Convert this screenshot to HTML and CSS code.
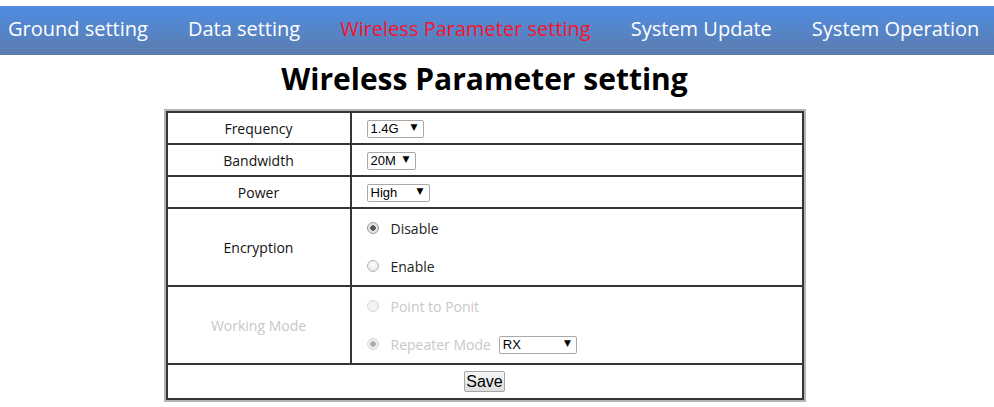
FILE: index.html
```html
<!DOCTYPE html>
<html>
<head>
	<title>Wireless Parameter setting</title>
	<link rel="stylesheet" href="styles.css">
</head>
<body>
	<div class="topbar">
		<a class="navitem" href="#">Ground setting</a>
		<a class="navitem" href="#">Data setting</a>
		<a class="navitem active" href="#">Wireless Parameter setting</a>
		<a class="navitem" href="#">System Update</a>
		<a class="navitem" href="#">System Operation</a>
	</div>

	<div class="content">
		<h1 class="title">Wireless Parameter setting</h1>

		<div class="frame">
		<table class="settings">
			<tr>
				<td class="name">Frequency</td>
				<td class="value">
					<span class="dropdown">
						<select class="sel sel-freq"><option>1.4G</option><option>2.4G</option></select>
					</span>
				</td>
			</tr>
			<tr>
				<td class="name">Bandwidth</td>
				<td class="value">
					<span class="dropdown">
						<select class="sel sel-bw"><option>20M</option><option>10M</option></select>
					</span>
				</td>
			</tr>
			<tr>
				<td class="name">Power</td>
				<td class="value">
					<span class="dropdown">
						<select class="sel sel-power"><option>High</option><option>Low</option></select>
					</span>
				</td>
			</tr>
			<tr class="tall">
				<td class="name">Encryption</td>
				<td class="value">
					<label class="opt"><input type="radio" name="enc" checked> Disable</label>
					<label class="opt"><input type="radio" name="enc"> Enable</label>
				</td>
			</tr>
			<tr class="tall disabled">
				<td class="name">Working Mode</td>
				<td class="value">
					<label class="opt"><input type="radio" name="mode" disabled> Point to Ponit</label>
					<label class="opt"><input type="radio" name="mode" checked disabled> Repeater Mode
						<span class="dropdown">
							<select class="sel sel-mode"><option>RX</option><option>TX</option></select>
						</span>
					</label>
				</td>
			</tr>
			<tr class="last">
				<td class="savecell" colspan="2"><button class="savebtn">Save</button></td>
			</tr>
		</table>
		</div>
	</div>
</body>
</html>
```

FILE: styles.css
```css
body {
	margin: 0;
	background: #fff;
	font-family: "Open Sans", "Noto Sans", sans-serif;
}

.topbar {
	display: flex;
	gap: 40px;
	margin-top: 6px;
	padding-left: 8px;
	height: 49px;
	padding-bottom: 4px;
	box-sizing: border-box;
	align-items: center;
	background: linear-gradient(#4f8de3, #5b7cad);
}

.navitem {
	color: #fff;
	text-decoration: none;
	font-size: 20px;
	white-space: nowrap;
}

.navitem.active {
	color: #f5142c;
}

.content {
	width: 969px;
}

.title {
	margin: 4px 0 10px;
	text-align: center;
	font-size: 30px;
	line-height: 40px;
	font-weight: bold;
	color: #000;
}

.frame {
	width: 638px;
	margin: 0 auto;
	border: 2px solid #b4b4b4;
}

.settings {
	width: 100%;
	border-spacing: 0;
	border: 2px solid #353535;
	font-size: 14px;
}

.settings td {
	border-bottom: 2px solid #353535;
	height: 30px;
	padding: 0;
}

.settings .last td {
	border-bottom: 0;
	height: 33px;
}

.name {
	width: 182px;
	text-align: center;
	color: #111;
	border-right: 2px solid #353535;
}

.value {
	padding-left: 15px !important;
}

.tall td {
	height: 76px;
}

.tall.disabled td {
	height: 75px;
}

.opt {
	display: flex;
	align-items: center;
	height: 38px;
	color: #222;
}

.disabled .name,
.disabled .opt {
	color: #c8c8c8;
}

.opt input {
	appearance: none;
	width: 12px;
	height: 12px;
	margin: 0 12px 0 0;
	border: 1px solid #b4b4b4;
	border-radius: 50%;
	background: radial-gradient(circle at 50% 35%, #fff, #e2e2e2);
}

.opt input:checked {
	background: radial-gradient(circle, #555 0 2.5px, #e6e6e6 3px);
	border-color: #9a9a9a;
}

.disabled .opt input {
	border-color: #d8d8d8;
	background: #f2f2f2;
}

.disabled .opt input:checked {
	background: radial-gradient(circle, #aaa 0 2.5px, #efefef 3px);
}

.dropdown {
	position: relative;
	display: inline-block;
}

.dropdown::after {
	content: "\25BC";
	position: absolute;
	right: 6px;
	top: 4px;
	font-size: 9px;
	color: #000;
	pointer-events: none;
	font-family: "DejaVu Sans", sans-serif;
}

.sel {
	appearance: none;
	height: 18px;
	border: 1px solid #a9a9a9;
	border-radius: 2px;
	background: #fff;
	font-family: "Liberation Sans", Arial, sans-serif;
	font-size: 13px;
	color: #000;
	padding: 0 0 0 3px;
}

.sel-freq { width: 57px; }
.sel-bw { width: 49px; }
.sel-power { width: 63px; }
.sel-mode { width: 78px; }

.opt .dropdown {
	margin-left: 8px;
}

.savecell {
	text-align: center;
}

.savebtn {
	font-family: "Liberation Sans", Arial, sans-serif;
	font-size: 16px;
	height: 21px;
	padding: 0 1px;
	border: 1px solid #a6a6a6;
	border-radius: 2px;
	background: linear-gradient(#f6f6f6, #dedede);
	color: #000;
	line-height: 17px;
}
```
